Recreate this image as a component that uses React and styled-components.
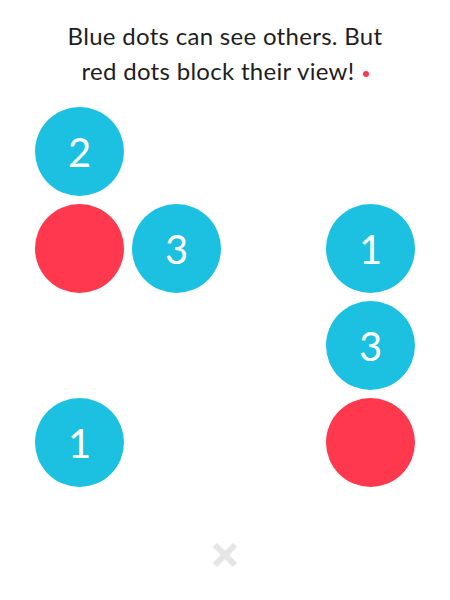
import React from 'react'
import styled, { createGlobalStyle } from 'styled-components'

const GlobalStyle = createGlobalStyle`
  html, body {
    margin: 0;
    padding: 0;
    background: #fff;
  }
  body {
    font-family: Lato, 'Open Sans', sans-serif;
  }
`

const Screen = styled.div`
  width: 450px;
  height: 600px;
  display: flex;
  flex-direction: column;
  align-items: center;
  overflow: hidden;
`

const Message = styled.p`
  margin: 18px 0 0;
  width: 100%;
  text-align: center;
  font-size: 24px;
  line-height: 35px;
  color: #1e1e1e;
  letter-spacing: 0.3px;
`

const Hint = styled.span`
  display: inline-block;
  width: 6px;
  height: 6px;
  margin-left: 8px;
  border-radius: 50%;
  background: #ff384d;
  vertical-align: middle;
`

const Board = styled.div`
  margin-top: 19px;
  display: grid;
  grid-template-columns: repeat(4, 89px);
  grid-auto-rows: 89px;
  gap: 8px;
`

const Dot = styled.div`
  border-radius: 50%;
  display: flex;
  align-items: center;
  justify-content: center;
  color: #fff;
  font-size: 40px;
  font-weight: 400;
  background: ${p => (p.$kind === 'red' ? '#ff384d' : p.$kind === 'blue' ? '#1cc0e0' : 'transparent')};
`

const Close = styled.button`
  margin-top: 52px;
  width: 32px;
  height: 32px;
  padding: 0;
  border: 0;
  background: none;
  display: flex;
  align-items: center;
  justify-content: center;
`

const board = [
  ['b2', '', '', ''],
  ['r', 'b3', '', 'b1'],
  ['', '', '', 'b3'],
  ['b1', '', '', 'r'],
]

export default function App() {
  return (
    <Screen>
      <GlobalStyle />
      <Message>
        Blue dots can see others. But
        <br />
        red dots block their view!<Hint />
      </Message>
      <Board>
        {board.flat().map((cell, i) => {
          if (cell === 'r') return <Dot key={i} $kind="red" />
          if (cell.startsWith('b')) return <Dot key={i} $kind="blue">{cell.slice(1)}</Dot>
          return <Dot key={i} />
        })}
      </Board>
      <Close aria-label="close">
        <svg width="28" height="28" viewBox="0 0 28 28">
          <path d="M4 4 L24 24 M24 4 L4 24" stroke="#e5e5e5" strokeWidth="6" strokeLinecap="butt" />
        </svg>
      </Close>
    </Screen>
  )
}
